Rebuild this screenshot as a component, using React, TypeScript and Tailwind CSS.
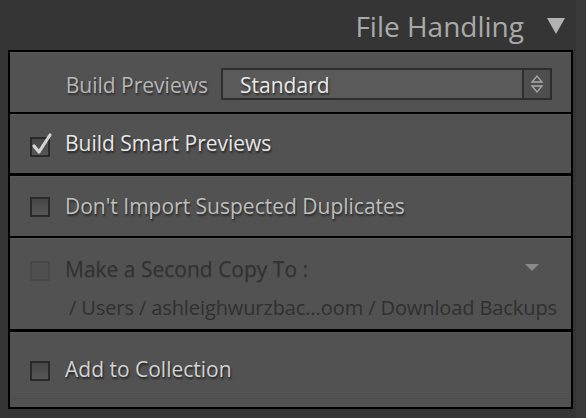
import React from 'react';

const font = { fontFamily: '"Open Sans", "Noto Sans", sans-serif' };

const Checkbox: React.FC<{ checked?: boolean; disabled?: boolean }> = ({ checked, disabled }) => (
  <div className="relative w-[20px] h-[20px] shrink-0">
    <div
      className={
        disabled
          ? 'w-full h-full border-2 border-[#484848] bg-[#4f4f4f]'
          : 'w-full h-full border-2 border-[#2a2a2a] bg-gradient-to-b from-[#474747] to-[#575757]'
      }
    />
    {checked && (
      <svg className="absolute left-[1px] top-[-5px]" width="22" height="24" viewBox="0 0 22 24">
        <path
          d="M3 14 L8 20 L19 3"
          fill="none"
          stroke="#d4d4d4"
          strokeWidth="3.2"
          strokeLinecap="round"
          strokeLinejoin="round"
        />
      </svg>
    )}
  </div>
);

export default function App() {
  return (
    <div className="w-[586px] h-[418px] bg-[#353535] flex" style={font}>
      <div className="w-[576px] flex flex-col">
        <div className="h-[50px] flex items-center justify-end pr-[10px] gap-[22px]">
          <span className="text-[28px] text-[#a9a9a9] leading-none pt-[2px]">File Handling</span>
          <svg width="20" height="18" viewBox="0 0 20 18" className="mt-[2px]">
            <path d="M1 1 L19 1 L10 17 Z" fill="#b2b2b2" />
          </svg>
        </div>

        <div className="ml-[8px] w-[565px] border-2 border-black bg-black flex flex-col">
          {/* Build Previews */}
          <div className="h-[60px] bg-[#525252] border-t border-[#5a5a5a] flex items-center pt-[3px]">
            <span className="w-[198px] text-right text-[21px] text-[#b6b6b6] [text-shadow:1px_2px_2px_rgba(0,0,0,0.45)] mt-[3px]">
              Build Previews
            </span>
            <div className="ml-[13px] w-[331px] h-[32px] border-2 border-[#2e2e2e] flex bg-[#5a5a5a]">
              <div className="flex-1 flex items-center pl-[17px] pt-[3px] text-[21px] text-[#e8e8e8] [text-shadow:1px_2px_2px_rgba(0,0,0,0.55)]">
                Standard
              </div>
              <div className="w-[28px] border-l-2 border-[#2e2e2e] bg-[#4e4e4e] flex items-center justify-center">
                <svg width="14" height="20" viewBox="0 0 14 20">
                  <path d="M2 8 L7 2 L12 8 Z" fill="none" stroke="#a8a8a8" strokeWidth="1.3" />
                  <path d="M2 12 L7 18 L12 12 Z" fill="none" stroke="#a8a8a8" strokeWidth="1.3" />
                </svg>
              </div>
            </div>
          </div>

          {/* Build Smart Previews */}
          <div className="mt-[2px] h-[59px] bg-[#525252] border-t border-[#5a5a5a] flex items-center pl-[20px] gap-[15px] pt-[5px]">
            <Checkbox checked />
            <span className="text-[21px] text-[#e6e6e6] [text-shadow:1px_2px_2px_rgba(0,0,0,0.6)] -mt-[6px]">
              Build Smart Previews
            </span>
          </div>

          {/* Duplicates */}
          <div className="mt-[3px] h-[60px] bg-[#525252] border-t border-[#5a5a5a] flex items-center pl-[20px] gap-[15px]">
            <Checkbox />
            <span className="text-[21px] text-[#bebebe] [text-shadow:1px_2px_2px_rgba(0,0,0,0.5)]">
              Don't Import Suspected Duplicates
            </span>
          </div>

          {/* Second copy (disabled) */}
          <div className="mt-[2px] h-[91px] bg-[#525252] border-t border-[#5a5a5a] flex flex-col pl-[20px] pr-[14px] pt-[17px]">
            <div className="flex items-center gap-[15px]">
              <Checkbox disabled />
              <span className="flex-1 text-[21px] text-[#323232] [text-shadow:0_1px_1px_rgba(0,0,0,0.15)] -mt-[2px]">
                Make a Second Copy To :
              </span>
              <svg width="14" height="7" viewBox="0 0 14 7" className="mr-[18px] -mt-[6px]">
                <path d="M0 0 L14 0 L7 7 Z" fill="#8a8a8a" />
              </svg>
            </div>
            <div className="text-right text-[20px] text-[#303030] mt-[7px] tracking-[-0.1px]">
              / Users / ashleighwurzbac…oom / Download Backups
            </div>
          </div>

          {/* Add to Collection */}
          <div className="mt-[3px] h-[75px] bg-[#525252] border-t border-[#5a5a5a] flex flex-col">
            <div className="h-[65px] flex items-center pl-[20px] gap-[15px] pt-[11px]">
              <Checkbox />
              <span className="text-[21px] text-[#d2d2d2] [text-shadow:1px_2px_2px_rgba(0,0,0,0.6)] -mt-[3px]">
                Add to Collection
              </span>
            </div>
            <div className="flex-1 border-t border-[#4a4a4a]" />
          </div>
        </div>
      </div>
      <div className="flex-1 bg-[#3a3a3a]" />
    </div>
  );
}
